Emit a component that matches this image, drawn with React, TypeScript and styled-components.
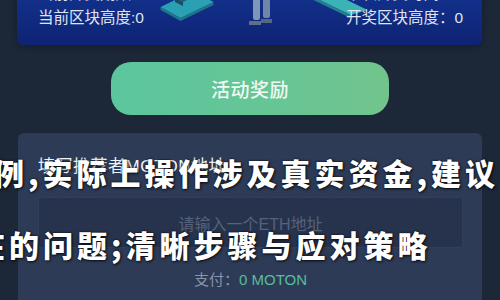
import React from "react";
import styled, { createGlobalStyle } from "styled-components";

const Global = createGlobalStyle`
  html, body { margin: 0; padding: 0; background: #1c2638; }
  body { font-family: "Liberation Sans", "Noto Sans CJK SC", sans-serif; }
  * { box-sizing: border-box; }
`;

const Page = styled.div`
  position: relative;
  width: 500px;
  height: 300px;
  overflow: hidden;
  background: #1c2738;
  display: flex;
  flex-direction: column;
`;

const Banner = styled.div`
  margin: -40px 18px 0 17px;
  height: 85px;
  border-radius: 0 0 6px 6px;
  background: linear-gradient(180deg, #17388f 0%, #12308a 45%, #0e2373 100%);
  display: grid;
  grid-template-columns: 1fr 190px 1fr;
  padding: 0 19px 0 21px;
  box-shadow: 0 2px 6px rgba(0, 0, 0, 0.25);
`;

const StatCol = styled.div<{ $align: "left" | "right" }>`
  padding: 22px 0 15px;
  text-align: ${(p) => p.$align};
  color: #dfe4ef;
  font-size: 15.5px;
  line-height: 24px;
  white-space: nowrap;
  direction: ${(p) => (p.$align === "right" ? "rtl" : "ltr")};
`;

const StatLine = styled.div`
  direction: ltr;
  unicode-bidi: isolate;
`;

const Art = styled.svg`
  display: block;
  width: 190px;
  height: 85px;
  overflow: visible;
`;

const ActionButton = styled.button`
  align-self: center;
  margin-top: 17px;
  width: 278px;
  height: 53px;
  border: none;
  border-radius: 20px;
  background: linear-gradient(90deg, #5bc69e 0%, #66c596 55%, #72c48c 100%);
  color: #f1f8f3;
  font-family: "Liberation Sans", "Noto Sans CJK SC", sans-serif;
  font-size: 19px;
  font-weight: 500;
  letter-spacing: 0.5px;
  padding: 0;
`;

const Card = styled.div`
  margin: 18px 18px 0 18px;
  flex: 1;
  background: #2d3b57;
  border-radius: 6px 6px 0 0;
  padding: 24px 19px 0 20px;
  display: flex;
  flex-direction: column;
`;

const Label = styled.div`
  color: #f2f4f8;
  font-size: 17px;
  line-height: 20px;
  letter-spacing: 0.5px;
`;

const AddressInput = styled.div`
  margin-top: 20px;
  height: 51px;
  background: #27334c;
  border: 1px solid #313f5b;
  border-radius: 3px;
  display: flex;
  align-items: center;
  justify-content: center;
  color: #55627c;
  font-size: 16px;
`;

const Pay = styled.div`
  margin-top: 22px;
  text-align: center;
  font-size: 15px;
  line-height: 20px;
  color: #8993a7;
`;

const Amount = styled.span`
  color: #58bd9e;
`;

const Watermark = styled.div<{ $top: number; $left: number }>`
  position: absolute;
  top: ${(p) => p.$top}px;
  left: ${(p) => p.$left}px;
  white-space: nowrap;
  font-family: "Noto Sans CJK SC", sans-serif;
  font-weight: 900;
  font-size: 30px;
  line-height: 30px;
  letter-spacing: 4px;
  color: #ffffff;
  text-shadow: 0 0 2px rgba(0, 0, 0, 0.9), 1px 1px 3px rgba(0, 0, 0, 0.7);
  pointer-events: none;
`;

export default function App() {
  return (
    <>
      <Global />
      <Page>
        <Banner>
          <StatCol $align="left">
            <StatLine>当前开奖期数:0</StatLine>
            <StatLine>当前区块高度:0</StatLine>
          </StatCol>
          <Art viewBox="0 0 190 85">
            <polygon points="4.5,50 24.5,61 57.5,45 57.5,42 24.5,58 4.5,47" fill="#1f7488" />
            <polygon points="4.5,47 24.5,58 57.5,42 37.5,31" fill="#2aa0b2" />
            <polygon points="19,38 27,42 35,38 27,34" fill="#1d5f7d" />
            <polygon points="19,38 27,42 27,46 19,42" fill="#174b66" />
            <rect x="97" y="26" width="7" height="34" rx="2" fill="#7f96b6" />
            <rect x="107" y="26" width="7" height="32" rx="2" fill="#6f86a8" />
            <path d="M93 61 h12 v4 h-12 z" fill="#5f6f88" />
            <path d="M105 59 h11 v4 h-11 z" fill="#566681" />
            <polygon points="157.5,37 174.5,32 211.5,50 194.5,55" fill="#3bb3b5" />
            <polygon points="157.5,37 194.5,55 194.5,58 157.5,40" fill="#23808e" />
          </Art>
          <StatCol $align="right">
            <StatLine>下次开奖时间：0</StatLine>
            <StatLine>开奖区块高度：0</StatLine>
          </StatCol>
        </Banner>
        <ActionButton>活动奖励</ActionButton>
        <Card>
          <Label>填写推荐者MOTON地址</Label>
          <AddressInput>请输入一个ETH地址</AddressInput>
          <Pay>
            支付：<Amount>0 MOTON</Amount>
          </Pay>
        </Card>
        <Watermark $top={157} $left={-6}>例,实际上操作涉及真实资金,建议</Watermark>
        <Watermark $top={229} $left={-25}>在的问题;清晰步骤与应对策略</Watermark>
      </Page>
    </>
  );
}
